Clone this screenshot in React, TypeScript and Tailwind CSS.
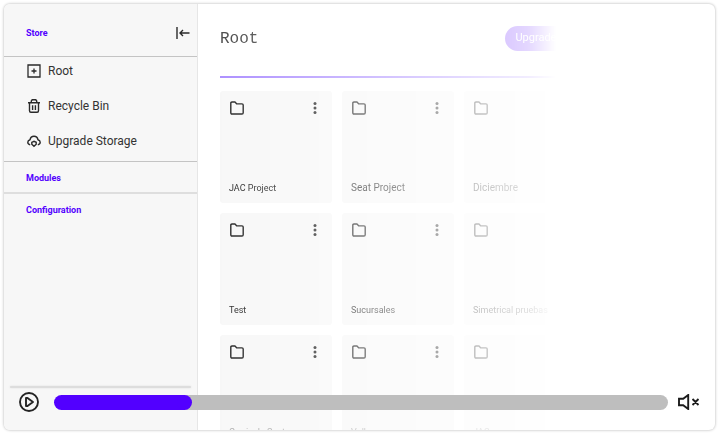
import React, { useState } from "react";
import type { CSSProperties, ReactNode } from "react";

function CollapseIcon() {
  return (
    <svg width="14" height="14" viewBox="0 0 14 14" fill="none" stroke="#2a2a2a" strokeWidth="1.4">
      <path d="M1 1v12M13.5 7H4M7 4 4 7l3 3" />
    </svg>
  );
}

function RootIcon() {
  return (
    <svg width="14" height="14" viewBox="0 0 14 14" fill="none" stroke="#2a2a2a" strokeWidth="1.3">
      <path d="M1 1h12v12H1zM7 4.5v5M4.5 7h5" />
    </svg>
  );
}

function BinIcon() {
  return (
    <svg width="14" height="14" viewBox="0 0 14 14" fill="none" stroke="#2a2a2a" strokeWidth="1.4">
      <path d="M1 3.800h12M4.300 3.800V2l.9-1.200h3.600L9.700 2v1.800M2.500 3.800v8c0 .9.500 1.500 1.400 1.500h6.200c.9 0 1.400-.6 1.400-1.500v-8M5.600 6.200v4.800M8.400 6.200v4.800" />
    </svg>
  );
}

function CloudIcon() {
  return (
    <svg width="14" height="14" viewBox="0 0 14 14" fill="none" stroke="#2a2a2a" strokeWidth="1.4">
      <path d="M3.200 10.800C1.700 10.500.8 9.500.8 8.300c0-1.300 1-2.200 2.200-2.500C3.400 3.700 5 2.300 7 2.300s3.600 1.400 4 3.500c1.200.3 2.200 1.200 2.200 2.500 0 1.200-.9 2.200-2.400 2.500" />
      <path d="M4.800 8.300 7 7.300l2.200 1v1.900L7 12.300l-2.200-2.100z" />
    </svg>
  );
}

function FolderIcon() {
  return (
    <svg width="14" height="14" viewBox="0 0 14 14" fill="none" stroke="#1c1c1c" strokeWidth="1.4" strokeLinejoin="round">
      <path d="M.8 2.200c0-.8.400-1.200 1.200-1.200h3l1.800 1.900H12c.8 0 1.200.4 1.200 1.200v7.700c0 .8-.4 1.200-1.200 1.200H2c-.8 0-1.200-.4-1.200-1.200z" />
    </svg>
  );
}

function DotsIcon() {
  return (
    <svg width="4" height="14" viewBox="0 0 4 14" fill="#1c1c1c">
      <circle cx="2" cy="2.500" r="1.500" />
      <circle cx="2" cy="7" r="1.500" />
      <circle cx="2" cy="11.500" r="1.500" />
    </svg>
  );
}

function PlayIcon() {
  return (
    <svg width="20" height="20" viewBox="0 0 20 20" fill="none" stroke="#242424" strokeWidth="1.9" strokeLinejoin="round">
      <circle cx="10" cy="10" r="9" />
      <path d="M7 6v8h1.500l5.500-4-5.500-4z" />
    </svg>
  );
}

function MuteIcon() {
  return (
    <svg width="22" height="16" viewBox="0 0 22 16" fill="none" stroke="#1c1c1c" strokeWidth="1.9">
      <path d="M1 4.700v6.600h4.200l5 3.700V1l-5 3.700zM14.500 5l6 6M20.500 5l-6 6" />
    </svg>
  );
}

function MenuItem({ icon, children }: { icon: ReactNode; children: ReactNode }) {
  return (
    <a href="#" className="flex h-[35px] items-center gap-[7px] pl-[23px] text-[12px] text-[#333]">
      {icon}
      {children}
    </a>
  );
}

type Folder = { name: string; style: string };

const small = "text-[9px] text-[#222]";
const regular = "text-[10px] text-[#222]";
const faint = "text-[9px] text-[#aaa]";

const folders: Folder[] = [
  { name: "JAC Project", style: small },
  { name: "Seat Project", style: regular },
  { name: "Diciembre", style: regular },
  { name: "", style: small },
  { name: "Test", style: small },
  { name: "Sucursales", style: small },
  { name: "Simetrical pruebas", style: small },
  { name: "", style: small },
  { name: "Curricula Seat", style: faint },
  { name: "Volkswagen", style: faint },
  { name: "JAC", style: faint },
  { name: "Nissan", style: faint },
];

function FolderCard({ name, style }: Folder) {
  return (
    <li className="flex aspect-square flex-col justify-between rounded-[3px] bg-[#f7f7f7] p-[10px] pb-2 pl-[9px]">
      <div className="flex justify-between pr-[5px] pl-px">
        <FolderIcon />
        <button type="button" aria-label={"Options for " + name}>
          <DotsIcon />
        </button>
      </div>
      <span className={style + " leading-[14px] whitespace-nowrap"}>{name}</span>
    </li>
  );
}

function SeekBar() {
  const [position, setPosition] = useState(41);
  const edge = `calc(8px + (100% - 15px) * ${position / 200})`;
  const style: CSSProperties = {
    background: `linear-gradient(to right, #5200ff ${edge}, #bebebe ${edge})`,
  };
  return (
    <input
      type="range"
      aria-label="Seek"
      max={200}
      value={position}
      onChange={(e) => setPosition(Number(e.target.value))}
      style={style}
      className="h-[15px] min-w-0 flex-1 appearance-none rounded-full [&::-webkit-slider-thumb]:size-[15px] [&::-webkit-slider-thumb]:appearance-none [&::-webkit-slider-thumb]:rounded-full [&::-webkit-slider-thumb]:bg-[#5200ff]"
    />
  );
}

export default function App() {
  return (
    <div className="h-screen bg-white p-1 pb-[3px] font-[Roboto,sans-serif]">
      <div className="relative flex h-full overflow-hidden rounded-md bg-white shadow-[0_0_3px_#00000050]">
        <aside className="flex w-[194px] shrink-0 flex-col border-r border-[#e6e6e6] bg-[#f7f7f7]">
          <div className="flex h-[53px] items-center justify-between border-b border-[#c4c4c4] pt-[6px] pr-[7px] pl-[22px]">
            <h2 className="pt-px text-[9px] font-bold text-[#5200ff]">Store</h2>
            <button type="button" aria-label="Collapse menu">
              <CollapseIcon />
            </button>
          </div>
          <nav className="h-[105px] border-b border-[#c4c4c4]">
            <div className="-mt-[4px]">
              <MenuItem icon={<RootIcon />}>Root</MenuItem>
              <MenuItem icon={<BinIcon />}>Recycle Bin</MenuItem>
              <MenuItem icon={<CloudIcon />}>Upgrade Storage</MenuItem>
            </div>
          </nav>
          <h2 className="flex h-8 items-center border-b-2 border-[#dedede] pt-[3px] pl-[22px] text-[9px] font-bold text-[#5200ff]">
            Modules
          </h2>
          <h2 className="flex h-8 items-center pt-[2px] pl-[22px] text-[9px] font-bold text-[#5200ff]">
            Configuration
          </h2>
          <div className="mx-[6px] mt-auto mb-[42px] h-[2px] rounded-full bg-[#dddddd] shadow-[0_0_2px_#dddddd]" />
        </aside>

        <main className="min-w-0 flex-1 overflow-hidden mask-[linear-gradient(to_right,black,#00000040_290px,#00000028_330px,transparent_358px)] pr-[17px] pl-[22px]">
          <header className="flex h-[74px] items-center justify-between border-b-2 border-[#a98aff] pr-[91px] pb-[3px]">
            <h1 className="font-['Liberation_Mono',monospace] text-[16px] text-[#444]">Root</h1>
            <button type="button" className="h-[25px] rounded-full bg-[#5200ff] px-[10px] text-[11px] whitespace-nowrap text-white">
              Upgrade Storage
            </button>
          </header>
          <ul className="mt-[13px] grid grid-cols-4 gap-[10px]">
            {folders.map((folder, i) => (
              <FolderCard key={i} {...folder} />
            ))}
          </ul>
        </main>

        <div className="absolute inset-x-0 bottom-[18px] flex items-center gap-[10px] pr-[15px] pl-[15px]">
          <button type="button" aria-label="Play" className="mr-[5px]">
            <PlayIcon />
          </button>
          <SeekBar />
          <button type="button" aria-label="Unmute">
            <MuteIcon />
          </button>
        </div>
      </div>
    </div>
  );
}
